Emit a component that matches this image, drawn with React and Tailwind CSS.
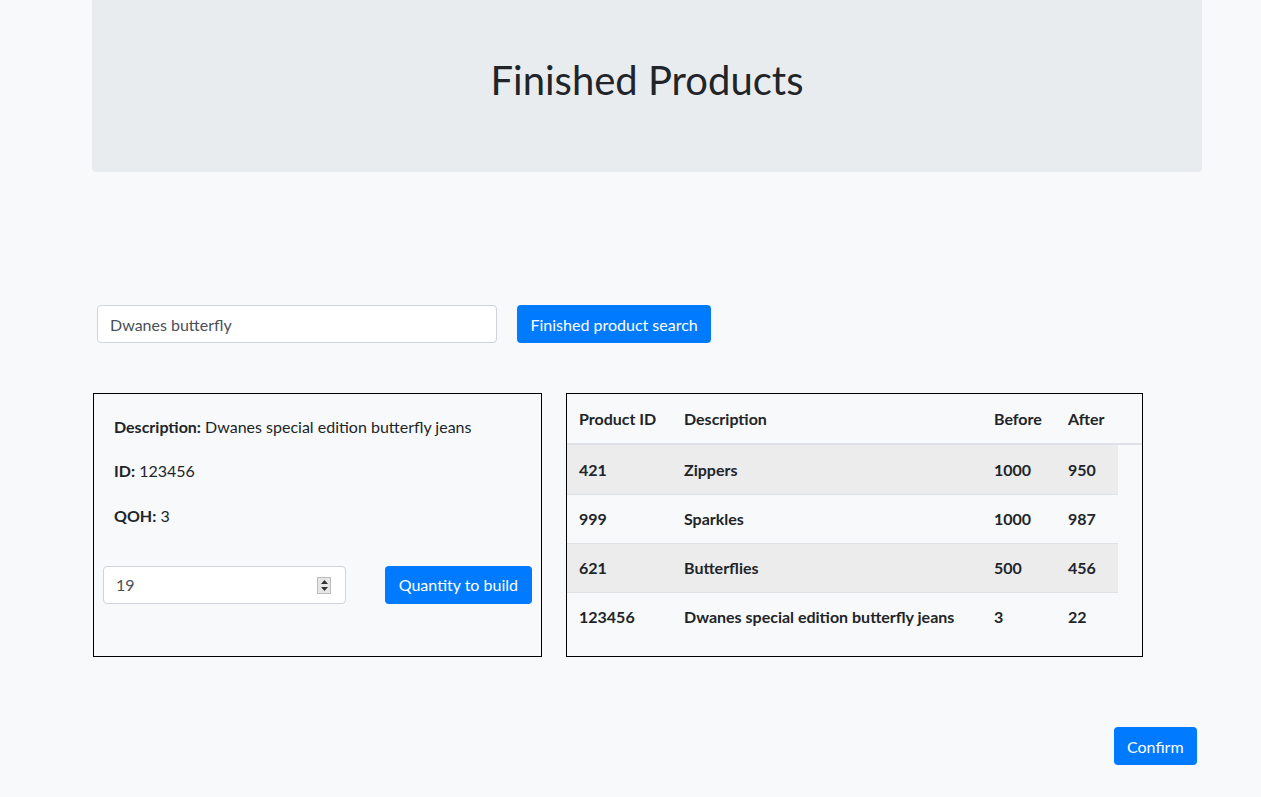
import React from 'react';

const rows = [
  { id: '421', desc: 'Zippers', before: '1000', after: '950', striped: true },
  { id: '999', desc: 'Sparkles', before: '1000', after: '987', striped: false },
  { id: '621', desc: 'Butterflies', before: '500', after: '456', striped: true },
  { id: '123456', desc: 'Dwanes special edition butterfly jeans', before: '3', after: '22', striped: false }
];

const Spinner = () => (
  <div className="absolute right-[14px] top-[10px] flex h-[17px] w-[14px] flex-col border border-[#bcbcbc] bg-[#e6e6e6]">
    <div className="flex flex-1 items-center justify-center">
      <svg width="7" height="4" viewBox="0 0 7 4"><path d="M3.5 0L7 4H0z" fill="#333" /></svg>
    </div>
    <div className="flex flex-1 items-center justify-center">
      <svg width="7" height="4" viewBox="0 0 7 4"><path d="M0 0h7L3.5 4z" fill="#333" /></svg>
    </div>
  </div>
);

const App = () => {
  return (
    <div
      className="min-h-[797px] bg-[#f8f9fa] text-[#212529]"
      style={{ fontFamily: 'Lato, "Noto Sans", sans-serif' }}
    >
      {/* header */}
      <div className="ml-[92px] flex h-[172px] w-[1110px] justify-center rounded-b-[4px] bg-[#e9ecef] pt-[56px]">
        <h1 className="text-[40px] font-normal leading-[48px]">Finished Products</h1>
      </div>

      {/* search */}
      <div className="ml-[97px] mt-[133px] flex items-center gap-[20px]">
        <div className="flex h-[38px] w-[400px] items-center rounded-[4px] border border-[#ced4da] bg-white px-[12px] pt-[2px] text-[16px] text-[#495057]">
          Dwanes butterfly
        </div>
        <button className="h-[38px] rounded-[4px] bg-[#007bff] px-[13.5px] pt-[2px] text-[16px] text-white">
          Finished product search
        </button>
      </div>

      <div className="ml-[93px] mt-[50px] flex gap-[24px]">
        {/* product card */}
        <div className="h-[264px] w-[449px] border border-black">
          <div className="px-[20px] pt-[21px] text-[16px] leading-[24px]">
            <p><span className="font-bold">Description:</span> Dwanes special edition butterfly jeans</p>
            <p className="mt-[20px]"><span className="font-bold">ID:</span> 123456</p>
            <p className="mt-[21px]"><span className="font-bold">QOH:</span> 3</p>
          </div>
          <div className="mt-[38px] flex items-center justify-between px-[9px]">
            <div className="relative flex h-[38px] w-[243px] items-center rounded-[4px] border border-[#ced4da] bg-white px-[12px] text-[16px] text-[#495057]">
              19
              <Spinner />
            </div>
            <button className="h-[38px] rounded-[4px] bg-[#007bff] px-[14px] text-[16px] text-white">
              Quantity to build
            </button>
          </div>
        </div>

        {/* table */}
        <div className="h-[264px] w-[577px] border border-black">
          <div className="flex h-[51px] items-center border-b-2 border-[#dee2e6] text-[16px] font-bold">
            <div className="w-[105px] pl-[12px]">Product ID</div>
            <div className="w-[310px] pl-[12px]">Description</div>
            <div className="w-[74px] pl-[12px]">Before</div>
            <div className="pl-[12px]">After</div>
          </div>
          <div className="w-[551px]">
            {rows.map((r, i) => (
              <div
                key={r.id}
                className={
                  'flex h-[49px] items-center text-[16px] font-bold ' +
                  (r.striped ? 'bg-[#ececed] ' : '') +
                  (i > 0 ? 'border-t border-[#dee2e6]' : '')
                }
              >
                <div className="w-[105px] pl-[12px]">{r.id}</div>
                <div className="w-[310px] pl-[12px] whitespace-nowrap">{r.desc}</div>
                <div className="w-[74px] pl-[12px]">{r.before}</div>
                <div className="pl-[12px]">{r.after}</div>
              </div>
            ))}
          </div>
        </div>
      </div>

      <div className="ml-[1114px] mt-[70px] pb-[32px]">
        <button className="h-[38px] rounded-[4px] bg-[#007bff] px-[13px] pt-[1px] text-[16px] text-white">
          Confirm
        </button>
      </div>
    </div>
  );
};

export default App;
